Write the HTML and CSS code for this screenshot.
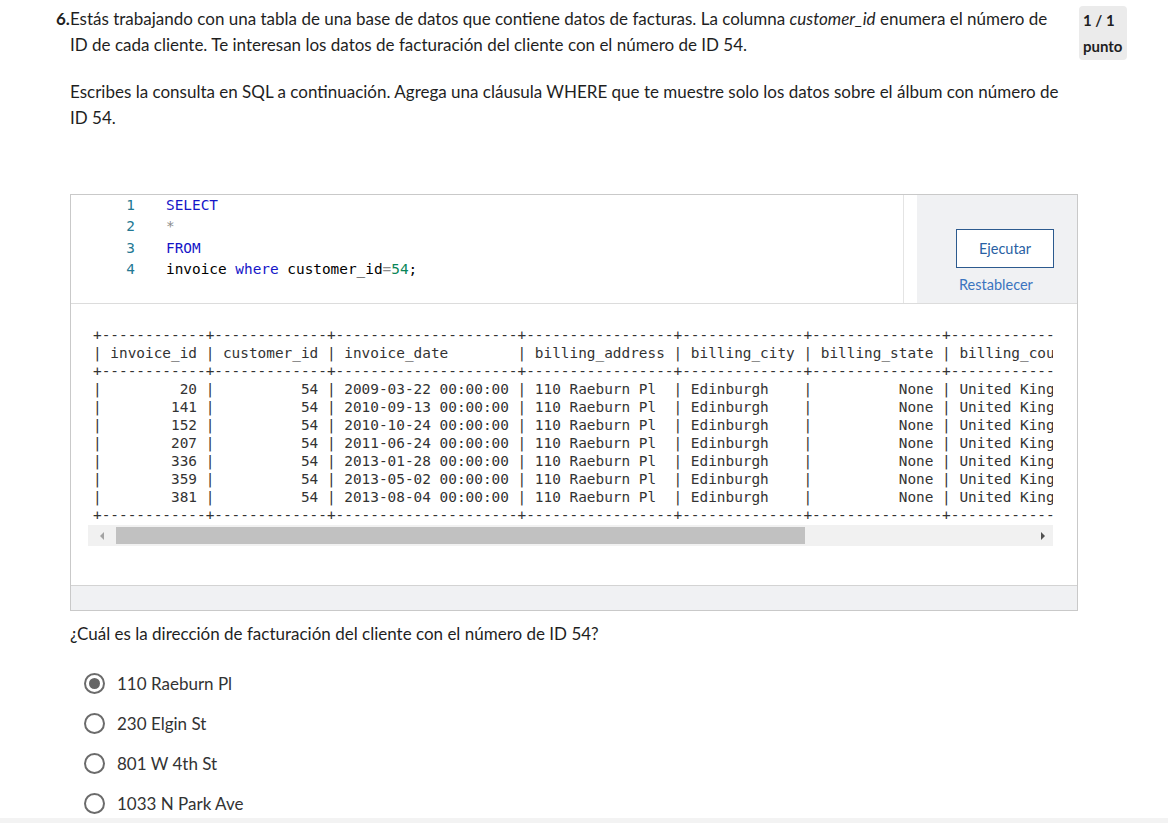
FILE: index.html
```html
<!DOCTYPE html>
<html lang="es">
<head>
<meta charset="utf-8">
<title>Pregunta 6</title>
<link rel="stylesheet" href="styles.css">
</head>
<body>
<div class="page">
  <div class="head">
    <div class="content">
      <p class="qtext"><b class="qnum">6.</b>Estás trabajando con una tabla de una base de datos que contiene datos de facturas. La columna <i>customer_id</i> enumera el número de ID de cada cliente. Te interesan los datos de facturación del cliente con el número de ID 54.</p>
      <p class="intro">Escribes la consulta en SQL a continuación. Agrega una cláusula WHERE que te muestre solo los datos sobre el álbum con número de ID 54.</p>

      <div class="editor">
        <div class="code-area">
          <div class="code-pane">
            <div class="line"><span class="ln">1</span><span class="code"><span class="kw">SELECT</span></span></div>
            <div class="line"><span class="ln">2</span><span class="code"><span class="op">*</span></span></div>
            <div class="line"><span class="ln">3</span><span class="code"><span class="kw">FROM</span></span></div>
            <div class="line"><span class="ln">4</span><span class="code">invoice <span class="kw">where</span> customer_id<span class="op">=</span><span class="num">54</span>;</span></div>
          </div>
          <div class="pane-gap"></div>
          <div class="actions">
            <div class="action-box">
              <button class="run">Ejecutar</button>
              <a class="reset">Restablecer</a>
            </div>
          </div>
        </div>
        <div class="output">
          <pre class="result">+------------+-------------+---------------------+-----------------+--------------+---------------+-----------------+---------------------+-------+
| invoice_id | customer_id | invoice_date        | billing_address | billing_city | billing_state | billing_country | billing_postal_code | total |
+------------+-------------+---------------------+-----------------+--------------+---------------+-----------------+---------------------+-------+
|         20 |          54 | 2009-03-22 00:00:00 | 110 Raeburn Pl  | Edinburgh    |          None | United Kingdom  | EH4 1HH             |  1.98 |
|        141 |          54 | 2010-09-13 00:00:00 | 110 Raeburn Pl  | Edinburgh    |          None | United Kingdom  | EH4 1HH             |  3.96 |
|        152 |          54 | 2010-10-24 00:00:00 | 110 Raeburn Pl  | Edinburgh    |          None | United Kingdom  | EH4 1HH             |  5.94 |
|        207 |          54 | 2011-06-24 00:00:00 | 110 Raeburn Pl  | Edinburgh    |          None | United Kingdom  | EH4 1HH             |  0.99 |
|        336 |          54 | 2013-01-28 00:00:00 | 110 Raeburn Pl  | Edinburgh    |          None | United Kingdom  | EH4 1HH             |  1.98 |
|        359 |          54 | 2013-05-02 00:00:00 | 110 Raeburn Pl  | Edinburgh    |          None | United Kingdom  | EH4 1HH             |  3.96 |
|        381 |          54 | 2013-08-04 00:00:00 | 110 Raeburn Pl  | Edinburgh    |          None | United Kingdom  | EH4 1HH             |  8.91 |
+------------+-------------+---------------------+-----------------+--------------+---------------+-----------------+---------------------+-------+</pre>
          <div class="hscroll">
            <span class="arrow arrow-left"></span>
            <span class="thumb"></span>
            <span class="track-rest"></span>
            <span class="arrow arrow-right"></span>
          </div>
        </div>
        <div class="editor-foot"></div>
      </div>

      <p class="prompt">¿Cuál es la dirección de facturación del cliente con el número de ID 54?</p>
      <div class="options">
        <label class="option"><span class="radio checked"></span><span class="opt-text">110 Raeburn Pl</span></label>
        <label class="option"><span class="radio"></span><span class="opt-text">230 Elgin St</span></label>
        <label class="option"><span class="radio"></span><span class="opt-text">801 W 4th St</span></label>
        <label class="option"><span class="radio"></span><span class="opt-text">1033 N Park Ave</span></label>
      </div>
    </div>
    <div class="badge">1 / 1<br>punto</div>
  </div>
</div>
<div class="next-section"></div>
</body>
</html>
```

FILE: styles.css
```css
* { box-sizing: border-box; }

body {
  margin: 0;
  font-family: Lato, "Open Sans", sans-serif;
  font-size: 17px;
  color: #1f1f1f;
  background: #fff;
}

.page {
  padding: 6px 41px 0 57px;
}

.head {
  display: flex;
  align-items: flex-start;
  gap: 1px;
}

.content {
  width: 1021px;
  padding-left: 13px;
}

.qtext {
  margin: 0;
  line-height: 26px;
  text-indent: -14px;
  padding-right: 13px;
}

.qnum {
  font-weight: 700;
}

.intro {
  margin: 21px 0 0;
  line-height: 26px;
}

.badge {
  width: 48px;
  background: #ebebeb;
  border-radius: 4px;
  font-weight: 700;
  font-size: 15px;
  line-height: 26px;
  padding: 1px 4px;
  color: #1f1f1f;
}

/* editor */
.editor {
  margin-top: 63px;
  width: 1008px;
  border: 1px solid #c9c9c9;
}

.code-area {
  display: flex;
  height: 109px;
  border-bottom: 1px solid #dcdcdc;
}

.code-pane {
  width: 833px;
  border-right: 1px solid #e4e4e4;
  font-family: "DejaVu Sans Mono", "Liberation Mono", monospace;
  font-size: 14.4px;
  line-height: 21.3px;
  color: #000;
}

.line {
  display: flex;
}

.ln {
  width: 64px;
  text-align: right;
  color: #237893;
  margin-right: 31px;
}

.code { white-space: pre; }
.kw { color: #1515c8; }
.op { color: #8c8c8c; }
.num { color: #098658; }

.pane-gap {
  width: 13px;
}

.actions {
  width: 160px;
  background: #f0f1f3;
}

.action-box {
  width: 98px;
  margin: 34px 0 0 39px;
  display: flex;
  flex-direction: column;
  align-items: flex-start;
}

.run {
  width: 98px;
  height: 39px;
  border: 1px solid #2c5a8e;
  background: #fff;
  color: #2a5fa3;
  font-family: Lato, "Open Sans", sans-serif;
  font-size: 14.5px;
  padding: 0;
}

.reset {
  margin: 7px 0 0 3px;
  color: #3b74bf;
  font-size: 14.5px;
  line-height: 19px;
}

.output {
  height: 281px;
  padding: 22px 24px 0 17px;
}

.result {
  margin: 0;
  padding-left: 5px;
  font-family: "DejaVu Sans Mono", "Liberation Mono", monospace;
  font-size: 14.4px;
  line-height: 18px;
  color: #333;
  white-space: pre;
  overflow: hidden;
}

.hscroll {
  display: flex;
  align-items: center;
  height: 21px;
  margin-top: 1px;
  background: #f1f1f1;
}

.arrow {
  width: 0;
  height: 0;
  border-top: 4px solid transparent;
  border-bottom: 4px solid transparent;
}

.arrow-left {
  border-right: 4px solid #a3a3a3;
  margin: 0 12px 0 12px;
}

.thumb {
  width: 689px;
  height: 17px;
  background: #c1c1c1;
}

.track-rest {
  flex: 1;
}

.arrow-right {
  border-left: 4px solid #505050;
  margin: 0 8px 0 0;
}

.editor-foot {
  height: 25px;
  background: #f0f1f3;
  border-top: 1px solid #d3d3d3;
}

/* question */
.prompt {
  margin: 10px 0 0;
  line-height: 26px;
}

.options {
  margin-top: 23px;
  display: flex;
  flex-direction: column;
  gap: 14px;
  padding-left: 14px;
}

.option {
  display: flex;
  align-items: center;
  height: 26px;
  color: #333;
}

.radio {
  width: 21px;
  height: 21px;
  border: 2px solid #6b6b6b;
  border-radius: 50%;
  margin-right: 12px;
  display: flex;
  align-items: center;
  justify-content: center;
}

.radio.checked::after {
  content: "";
  width: 11px;
  height: 11px;
  border-radius: 50%;
  background: #666;
}

.next-section {
  margin-top: 2px;
  height: 5px;
  background: #f3f3f3;
}
```
